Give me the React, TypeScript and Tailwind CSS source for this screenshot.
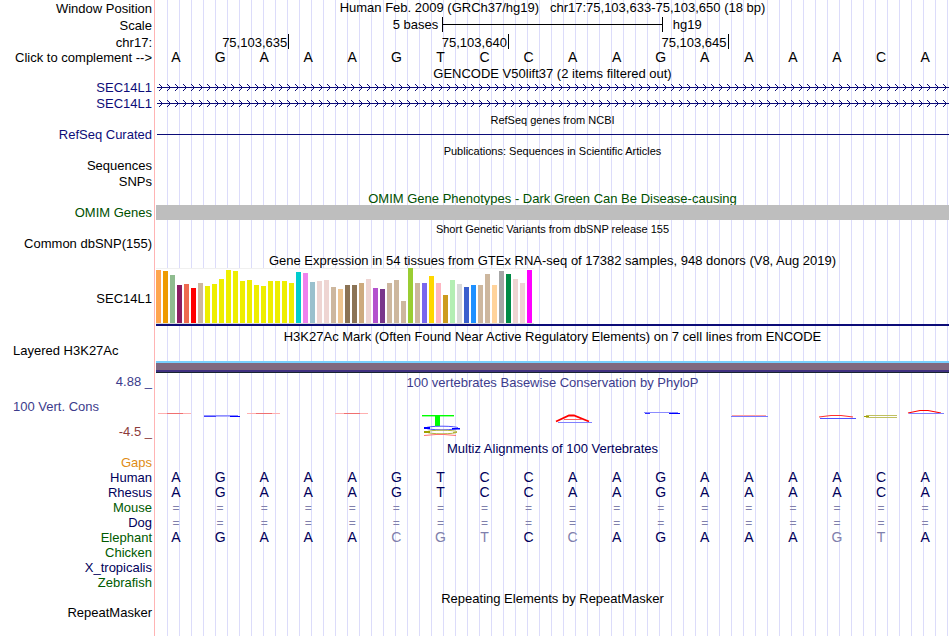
import type { ReactNode } from 'react';

const sequence = 'AGAAAGTCCAAGAAAACA';

const alignments = [
  { name: 'Gaps', color: 'text-[#e08c14]', bases: '' },
  { name: 'Human', color: 'text-[#00005a]', bases: sequence },
  { name: 'Rhesus', color: 'text-[#00005a]', bases: sequence },
  { name: 'Mouse', color: 'text-[#005a00]', bases: '==================' },
  { name: 'Dog', color: 'text-[#00005a]', bases: '==================' },
  { name: 'Elephant', color: 'text-[#005a00]', bases: 'AGAAACGTCCAGAAAGTA' },
  { name: 'Chicken', color: 'text-[#005a00]', bases: '' },
  { name: 'X_tropicalis', color: 'text-[#00005a]', bases: '' },
  { name: 'Zebrafish', color: 'text-[#005a00]', bases: '' },
];

// [color, height] per tissue
const tissues: [string, number][] = [
  ['#ffa54f', 53], ['#ee9a00', 52], ['#8fbc8f', 48], ['#8b1c62', 38], ['#ee6a50', 39], ['#ff0000', 35],
  ['#cdb79e', 40], ['#eeee00', 37], ['#eeee00', 39], ['#eeee00', 44], ['#eeee00', 53], ['#eeee00', 52],
  ['#eeee00', 42], ['#eeee00', 43], ['#eeee00', 38], ['#eeee00', 37], ['#eeee00', 42], ['#eeee00', 42],
  ['#eeee00', 42], ['#eeee00', 40], ['#00cdcd', 51], ['#ee82ee', 50], ['#9ac0cd', 41], ['#eed5d2', 42],
  ['#eed5d2', 43], ['#cdb79e', 36], ['#eec591', 34], ['#8b7355', 38], ['#8b7355', 38], ['#cdaa7d', 40],
  ['#eed5d2', 44], ['#b452cd', 35], ['#7a378b', 34], ['#cdb79e', 40], ['#cdb79e', 43], ['#cdb79e', 22],
  ['#9acd32', 55], ['#cdb79e', 40], ['#7a67ee', 40], ['#ffd700', 47], ['#ffb6c1', 40], ['#cd9b1d', 28],
  ['#b4eeb4', 43], ['#d9d9d9', 39], ['#3a5fcd', 36], ['#1e90ff', 38], ['#cdb79e', 38], ['#cdb79e', 49],
  ['#ffd39b', 38], ['#a6a6a6', 52], ['#008b45', 49], ['#eed5d2', 44], ['#eed5d2', 40], ['#ff00ff', 53],
];

function Row({ label, size = 'h-[15px]', color = 'text-black', children }: {
  label?: ReactNode;
  size?: string;
  color?: string;
  children?: ReactNode;
}) {
  return (
    <div className={`flex shrink-0 ${size}`}>
      <div className={`w-[155px] shrink-0 mr-px pr-0.5 border-r border-[#ffb4b4] text-right ${color}`}>{label}</div>
      <div className="flex-1 min-w-0 mr-px bg-[repeating-linear-gradient(to_right,transparent_0_11px,#dcdcfa_11px_12px)]">
        {children}
      </div>
    </div>
  );
}

function Title({ text, label, color = 'text-black', small, labelColor, compact }: {
  text: string;
  label?: string;
  color?: string;
  small?: boolean;
  labelColor?: string;
  compact?: boolean;
}) {
  return (
    <Row size={compact ? 'h-[15px]' : 'h-4'} label={label} color={labelColor}>
      <h2 className={`text-center whitespace-pre ${compact ? 'pt-px' : 'pt-0.5'} ${small ? 'text-[11px]' : 'text-[13px]'} ${color}`}>
        {text}
      </h2>
    </Row>
  );
}

function Bases({ bases, color = 'text-black' }: { bases: string; color?: string }) {
  const unaligned = bases.startsWith('=');
  return (
    <div className={`flex ${unaligned ? 'text-xs leading-[14px] pt-px' : 'text-sm leading-[15px]'} ${color}`}>
      {bases.split('').map((b, i) => (
        <span key={i} className={`flex-1 pr-1 text-center ${color !== 'text-black' && b !== sequence[i] ? 'text-[#8080ac]' : ''}`}>
          {b}
        </span>
      ))}
    </div>
  );
}

function GeneArrows({ id }: { id: string }) {
  return (
    <svg className="block w-full h-[15px]" aria-hidden="true">
      <defs>
        <pattern id={id} x="0" y="4" width="8" height="7" patternUnits="userSpaceOnUse">
          <path d="M3 0 L6.5 3.5 L3 7" fill="none" stroke="#0c0c78" strokeWidth="1" />
        </pattern>
      </defs>
      <rect x="0" y="4" width="100%" height="7" fill={`url(#${id})`} />
      <rect x="1" y="7" width="100%" height="1" fill="#0c0c78" />
    </svg>
  );
}

function Conservation() {
  return (
    <svg className="block w-full h-[51px]" viewBox="0 0 793 51" preserveAspectRatio="none" fill="none" aria-hidden="true">
      {/* weakly conserved */}
      {[2, 91, 179].map(x => (
        <g key={x}>
          <rect x={x} y="24" width="33" height="1" fill="#ffb0b0" />
          <rect x={x + 9} y="24" width="16" height="1" fill="#f07070" />
        </g>
      ))}
      <rect x="48" y="26" width="34" height="1" fill="#9090ff" />
      <rect x="48" y="27" width="12" height="1" fill="#4040ff" />
      <rect x="60" y="27" width="14" height="1" fill="#b0b0ff" />
      <rect x="74" y="27" width="10" height="1" fill="#0000ff" />

      {/* stacked column */}
      <rect x="266" y="26" width="32" height="1.4" fill="#00ff00" />
      <rect x="279" y="26" width="5" height="11" fill="#00ff00" />
      <ellipse cx="286" cy="39" rx="16" ry="1.8" stroke="#5050ff" />
      <rect x="268" y="38" width="6" height="2" fill="#0000ff" />
      <rect x="296" y="39" width="8" height="1.5" fill="#0000ff" />
      <ellipse cx="286" cy="43" rx="15" ry="1.8" stroke="#b4b43c" />
      <rect x="268" y="42" width="6" height="2" fill="#a0a000" />
      <rect x="297" y="43" width="4" height="1" fill="#b4b43c" />
      <path d="M268 46.5 L280 45.5 H288 L300 46.5" stroke="#ff7070" />

      <path d="M400 32.5 L413 26.5 H418 L433 32.5" stroke="#ff0000" strokeWidth="1.8" />
      <path d="M408 30.5 H426" stroke="#ff6060" />
      <path d="M402 33.5 H436" stroke="#8080ff" />

      <rect x="488" y="23" width="34" height="1" fill="#8c8cff" />
      <rect x="489" y="24" width="5" height="1" fill="#3030ff" />
      <rect x="513" y="24" width="11" height="1" fill="#0000ff" />

      <rect x="576" y="26" width="34" height="1" fill="#ffa0a0" />
      <rect x="575" y="27" width="37" height="1" fill="#7878ff" />

      <path d="M663 28 L675 26.5 H685 L697 28" stroke="#ff3030" strokeWidth="1.2" />
      <rect x="664" y="29" width="36" height="1" fill="#5050ff" />

      <rect x="710" y="26" width="31" height="1" fill="#c0c060" />
      <rect x="710" y="28" width="31" height="1" fill="#c0c060" />
      <rect x="708" y="27" width="5" height="1" fill="#a0a000" />

      <path d="M752 24 L764 21.5 H772 L785 24" stroke="#ff0000" strokeWidth="1.2" />
      <path d="M753 24.5 H788" stroke="#8080ff" />
    </svg>
  );
}

export default function App() {
  return (
    <main className="min-h-screen flex flex-col bg-white text-black text-[13px] leading-[15px] font-['Liberation_Sans',Arial,sans-serif] cursor-default">
      {/* Position header */}
      <Row size="h-[17px]" label={<div className="pt-px">Window Position</div>}>
        <h1 className="text-center whitespace-pre">Human Feb. 2009 (GRCh37/hg19)   chr17:75,103,633-75,103,650 (18 bp)</h1>
      </Row>
      <Row size="h-[17px]" label={<div className="pt-px">Scale</div>}>
        <div className="flex items-center">
          <span className="w-[36.1%] pr-1 text-right">5 bases</span>
          <div className="w-[27.8%] h-[15px] flex items-center border-x border-black">
            <div className="w-full h-px bg-black" />
          </div>
          <span className="pl-2.5">hg19</span>
        </div>
      </Row>
      <Row size="h-4" label={<div className="pt-px">chr17:</div>}>
        <div className="flex text-right">
          <span className="w-[16.8%] h-[15px] pt-px pr-px border-r border-black">75,103,635</span>
          <span className="w-[27.7%] h-[15px] pt-px pr-px border-r border-black">75,103,640</span>
          <span className="w-[27.7%] h-[15px] pt-px pr-px border-r border-black">75,103,645</span>
        </div>
      </Row>
      <Row label="Click to complement -->">
        <Bases bases={sequence} />
      </Row>

      {/* Genes */}
      <Title compact text="GENCODE V50lift37 (2 items filtered out)" />
      <Row size="h-4" label="SEC14L1" color="text-[#0c0c78]">
        <GeneArrows id="arrows-1" />
      </Row>
      <Row label="SEC14L1" color="text-[#0c0c78]">
        <GeneArrows id="arrows-2" />
      </Row>
      <Title text="RefSeq genes from NCBI" small />
      <Row label="RefSeq Curated" color="text-[#0c0c78]">
        <div className="h-full flex items-center pl-px">
          <div className="w-full h-px bg-[#0c0c78]" />
        </div>
      </Row>

      <Title text="Publications: Sequences in Scientific Articles" small />
      <Row size="h-4" label="Sequences" />
      <Row label="SNPs" />

      <Title text="OMIM Gene Phenotypes - Dark Green Can Be Disease-causing" color="text-[#005000]" />
      <Row label="OMIM Genes" color="text-[#005000]">
        <div className="h-full bg-[#bebebe]" />
      </Row>

      <Title text="Short Genetic Variants from dbSNP release 155" small />
      <Row label="Common dbSNP(155)" />

      {/* Expression */}
      <Title text="Gene Expression in 54 tissues from GTEx RNA-seq of 17382 samples, 948 donors (V8, Aug 2019)" />
      <Row size="h-[60px]" label={<div className="h-full flex items-center justify-end pt-0.5">SEC14L1</div>}>
        <div className="pt-px">
          <div className="flex items-end gap-0.5 w-fit h-14 pr-0.5 bg-white border-t border-t-[#f0f0f0] border-b border-b-[#d8d8d8]">
            {tissues.map(([color, height], i) => (
              <div key={i} className="w-[5px] shrink-0" style={{ backgroundColor: color, height }} />
            ))}
          </div>
          <div className="h-0.5 bg-[#0c0c78]" />
        </div>
      </Row>

      {/* Regulation */}
      <Title text="H3K27Ac Mark (Often Found Near Active Regulatory Elements) on 7 cell lines from ENCODE" />
      <Row size="h-[31px]" label={<div className="pl-[13px] text-left">Layered H3K27Ac</div>}>
        <div className="h-full flex flex-col justify-end pb-px">
          <div className="h-0.5 bg-[#78d0ff]" />
          <div className="h-[7px] bg-[#806880]" />
          <div className="h-0.5 bg-[#403080]" />
          <div className="h-px bg-[#182430]" />
        </div>
      </Row>

      {/* Conservation */}
      <Title
        compact
        text="100 vertebrates Basewise Conservation by PhyloP"
        color="text-[#3c3c8c]"
        label="4.88 _"
        labelColor="text-[#3c3c8c]"
      />
      <Row
        size="h-[51px]"
        label={
          <div className="h-full flex flex-col justify-between pt-2.5 pb-px">
            <div className="pl-[13px] text-left text-[#3c3c8c]">100 Vert. Cons</div>
            <div className="text-[#8c3c3c]">-4.5 _</div>
          </div>
        }
      >
        <Conservation />
      </Row>

      <Title compact text="Multiz Alignments of 100 Vertebrates" color="text-[#00005a]" />
      {alignments.map(a => (
        <Row key={a.name} label={a.name} color={a.color}>
          <Bases bases={a.bases} color="text-[#00005a]" />
        </Row>
      ))}

      <Title compact text="Repeating Elements by RepeatMasker" />
      <Row size="grow min-h-[15px]" label="RepeatMasker" />
    </main>
  );
}
